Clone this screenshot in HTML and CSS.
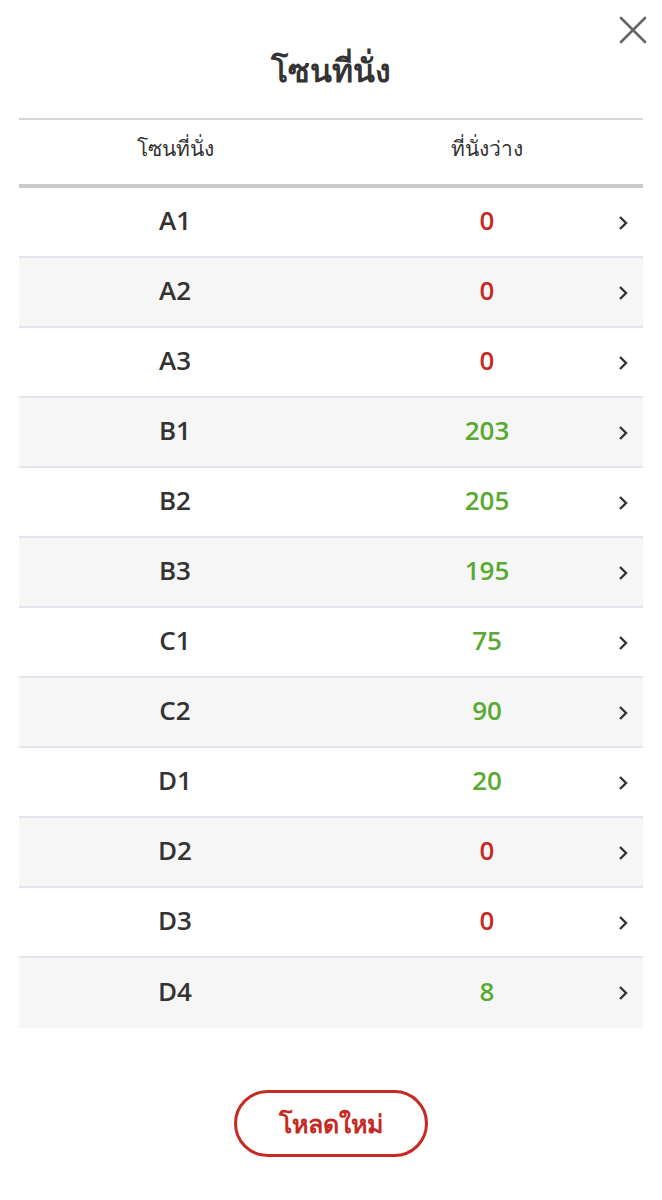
FILE: index.html
```html
<!DOCTYPE html>
<html lang="th">
<head>
  <meta charset="UTF-8" />
  <meta name="viewport" content="width=device-width, initial-scale=1.0"/>
  <title>โซนที่นั่ง</title>
  <link rel="stylesheet" href="styles.css">
</head>
<body>

  <div class="modal">
    <button class="close" aria-label="close">
      <svg width="28" height="28" viewBox="0 0 28 28">
        <path d="M2 2 L26 26 M26 2 L2 26" stroke="#666" stroke-width="2.6" stroke-linecap="round" fill="none"/>
      </svg>
    </button>

    <h1>โซนที่นั่ง</h1>

    <div class="zone-table">
      <div class="head">
        <div>โซนที่นั่ง</div>
        <div>ที่นั่งว่าง</div>
      </div>

      <div class="row"><div class="zone">A1</div><div class="seats empty">0</div><svg class="arrow" viewBox="0 0 10 16"><path d="M2 2 L8 8 L2 14"/></svg></div>
      <div class="row"><div class="zone">A2</div><div class="seats empty">0</div><svg class="arrow" viewBox="0 0 10 16"><path d="M2 2 L8 8 L2 14"/></svg></div>
      <div class="row"><div class="zone">A3</div><div class="seats empty">0</div><svg class="arrow" viewBox="0 0 10 16"><path d="M2 2 L8 8 L2 14"/></svg></div>
      <div class="row"><div class="zone">B1</div><div class="seats">203</div><svg class="arrow" viewBox="0 0 10 16"><path d="M2 2 L8 8 L2 14"/></svg></div>
      <div class="row"><div class="zone">B2</div><div class="seats">205</div><svg class="arrow" viewBox="0 0 10 16"><path d="M2 2 L8 8 L2 14"/></svg></div>
      <div class="row"><div class="zone">B3</div><div class="seats">195</div><svg class="arrow" viewBox="0 0 10 16"><path d="M2 2 L8 8 L2 14"/></svg></div>
      <div class="row"><div class="zone">C1</div><div class="seats">75</div><svg class="arrow" viewBox="0 0 10 16"><path d="M2 2 L8 8 L2 14"/></svg></div>
      <div class="row"><div class="zone">C2</div><div class="seats">90</div><svg class="arrow" viewBox="0 0 10 16"><path d="M2 2 L8 8 L2 14"/></svg></div>
      <div class="row"><div class="zone">D1</div><div class="seats">20</div><svg class="arrow" viewBox="0 0 10 16"><path d="M2 2 L8 8 L2 14"/></svg></div>
      <div class="row"><div class="zone">D2</div><div class="seats empty">0</div><svg class="arrow" viewBox="0 0 10 16"><path d="M2 2 L8 8 L2 14"/></svg></div>
      <div class="row"><div class="zone">D3</div><div class="seats empty">0</div><svg class="arrow" viewBox="0 0 10 16"><path d="M2 2 L8 8 L2 14"/></svg></div>
      <div class="row"><div class="zone">D4</div><div class="seats">8</div><svg class="arrow" viewBox="0 0 10 16"><path d="M2 2 L8 8 L2 14"/></svg></div>
    </div>

    <div class="actions">
      <button class="reload">โหลดใหม่</button>
    </div>
  </div>

</body>
</html>
```

FILE: styles.css
```css
* {
  margin: 0;
  padding: 0;
  box-sizing: border-box;
}

body {
  font-family: 'Open Sans', 'Noto Sans', sans-serif;
  background-color: white;
  color: #333;
}

.modal {
  position: relative;
  padding: 48px 19px 0;
}

.close {
  position: absolute;
  top: 16px;
  right: 15px;
  background: none;
  border: none;
  width: 28px;
  height: 28px;
  cursor: pointer;
}

h1 {
  font-size: 32px;
  font-weight: 700;
  text-align: center;
  line-height: 44px;
  margin-bottom: 26px;
}

.zone-table {
  border-top: 2px solid #d6d6d6;
}

.head {
  display: grid;
  grid-template-columns: 1fr 1fr;
  height: 68px;
  padding-bottom: 7px;
  align-items: center;
  text-align: center;
  font-size: 21px;
  border-bottom: 4px solid #cbcbcd;
}

.row {
  position: relative;
  display: grid;
  grid-template-columns: 1fr 1fr;
  align-items: center;
  text-align: center;
  height: 70px;
  padding-bottom: 4px;
  font-size: 26px;
  font-weight: 600;
  border-bottom: 2px solid #e4e4ec;
}

.row:nth-child(odd) {
  background-color: #f6f6f6;
}

.row:last-child {
  border-bottom: none;
}

.seats {
  color: #5aaa32;
}

.seats.empty {
  color: #c62a23;
}

.arrow {
  position: absolute;
  right: 15px;
  top: 27px;
  width: 10px;
  height: 16px;
  fill: none;
  stroke: #333;
  stroke-width: 2.4;
}

.actions {
  display: flex;
  justify-content: center;
  padding-top: 62px;
}

.reload {
  width: 194px;
  height: 67px;
  border: 3px solid #c62a23;
  border-radius: 34px;
  background: white;
  color: #c62a23;
  font-family: inherit;
  font-size: 25px;
  font-weight: 700;
  cursor: pointer;
}
```
